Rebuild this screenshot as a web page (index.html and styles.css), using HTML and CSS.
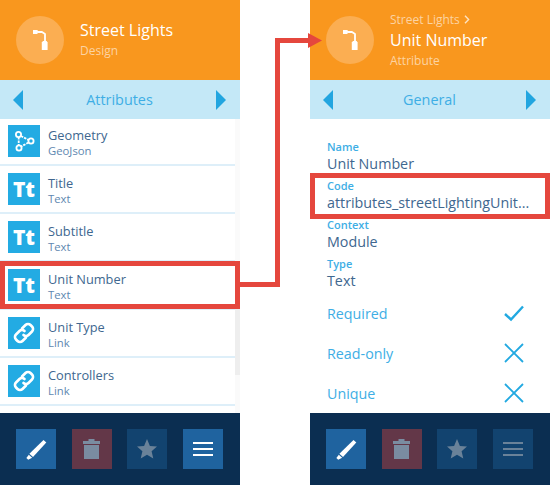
FILE: index.html
```html
<!DOCTYPE html>
<html lang="en">
<head>
<meta charset="utf-8">
<title>Street Lights</title>
<link rel="stylesheet" href="styles.css">
</head>
<body>
<svg class="defs" width="0" height="0" aria-hidden="true">
  <symbol id="lamp" viewBox="0 0 48 48">
    <path d="M17 15h4l.6 1h4.400l3 2v8" fill="none" stroke="#fff" stroke-width="1.800" stroke-linejoin="round"/>
    <path d="M17 15h4.500v3H17z" fill="#fff"/>
    <path d="M27 25h3.600l1 1.500V34h-5.800v-7.500z" fill="#fff"/>
  </symbol>
  <symbol id="pencil" viewBox="0 0 40 40">
    <path d="M27.500 11l2.800 2.600-13.300 14.400-3.600-3.200z" fill="#fff"/>
    <path d="M12.800 25.800l3.400 3-4 1.900-1.800-1.600z" fill="#fff"/>
  </symbol>
  <symbol id="trash" viewBox="0 0 40 40">
    <path d="M11 12h17v3H11zM16.500 10h6v2h-6z" fill="#7a8ca1"/>
    <path d="M12 16h15v14H12z" fill="#7a8ca1"/>
  </symbol>
  <symbol id="star" viewBox="0 0 40 40">
    <path d="M20 10l2.900 7 7.100.5-5.400 4.700 1.700 7.300-6.300-3.800-6.300 3.800 1.700-7.300-5.400-4.700 7.100-.5z" fill="#6a8299"/>
  </symbol>
  <symbol id="link" viewBox="0 0 32 32">
    <g fill="none" stroke="#fff" stroke-width="2.600" stroke-linecap="round">
      <path d="M14 11.500l3.500-3.500a3.500 3.500 0 0 1 5 0l1.500 1.500a3.500 3.500 0 0 1 0 5l-3.500 3.500a3.500 3.500 0 0 1-5 0"/>
      <path d="M18 20.500l-3.500 3.500a3.500 3.500 0 0 1-5 0l-1.500-1.500a3.500 3.500 0 0 1 0-5l3.500-3.500a3.500 3.500 0 0 1 5 0"/>
    </g>
  </symbol>
  <symbol id="cross" viewBox="0 0 20 20">
    <path d="M1 1l18 18M19 1L1 19" fill="none" stroke="#22a9e1" stroke-width="1.800"/>
  </symbol>
</svg>

<main class="page">
  <section class="panel">
    <header class="head">
      <div class="disc"><svg class="lamp" width="48" height="48"><use href="#lamp"/></svg></div>
      <div class="head-text">
        <div class="head-title">Street Lights</div>
        <div class="head-sub">Design</div>
      </div>
    </header>
    <nav class="tabs">
      <span class="tri tri-left"></span>
      <span class="tab-name">Attributes</span>
      <span class="tri tri-right"></span>
    </nav>
    <div class="body-list">
      <ul class="list">
        <li class="row">
          <span class="tile">
            <svg width="32" height="32" viewBox="0 0 32 32">
              <g fill="none" stroke="#fff" stroke-width="1.800">
                <circle cx="10.500" cy="9.500" r="2.600"/>
                <circle cx="23" cy="16" r="2.600"/>
                <circle cx="11" cy="23" r="2.600"/>
                <path d="M13 11l7.500 4M20.500 17.500L13.200 21.500M10.700 12v8.300" stroke-dasharray="2.500 1"/>
              </g>
            </svg>
          </span>
          <div class="row-text"><div class="row-name">Geometry</div><div class="row-type">GeoJson</div></div>
        </li>
        <li class="row">
          <span class="tile tile-text">Tt</span>
          <div class="row-text"><div class="row-name">Title</div><div class="row-type">Text</div></div>
        </li>
        <li class="row">
          <span class="tile tile-text">Tt</span>
          <div class="row-text"><div class="row-name">Subtitle</div><div class="row-type">Text</div></div>
        </li>
        <li class="row">
          <span class="tile tile-text">Tt</span>
          <div class="row-text"><div class="row-name">Unit Number</div><div class="row-type">Text</div></div>
        </li>
        <li class="row">
          <span class="tile"><svg width="32" height="32"><use href="#link"/></svg></span>
          <div class="row-text"><div class="row-name">Unit Type</div><div class="row-type">Link</div></div>
        </li>
        <li class="row">
          <span class="tile"><svg width="32" height="32"><use href="#link"/></svg></span>
          <div class="row-text"><div class="row-name">Controllers</div><div class="row-type">Link</div></div>
        </li>
      </ul>
      <div class="track"><div class="thumb"></div></div>
    </div>
    <footer class="foot">
      <span class="btn btn-on"><svg width="40" height="40"><use href="#pencil"/></svg></span>
      <span class="btn btn-del"><svg width="40" height="40"><use href="#trash"/></svg></span>
      <span class="btn btn-dim"><svg width="40" height="40"><use href="#star"/></svg></span>
      <span class="btn btn-on">
        <svg width="40" height="40" viewBox="0 0 40 40"><path d="M10 14h20M10 20h20M10 26h20" stroke="#fff" stroke-width="2.200"/></svg>
      </span>
    </footer>
  </section>

  <section class="panel">
    <header class="head">
      <div class="disc"><svg class="lamp" width="48" height="48"><use href="#lamp"/></svg></div>
      <div class="head-text">
        <div class="head-crumb">Street Lights <svg class="crumb-chev" width="6" height="9" viewBox="0 0 6 9"><path d="M1 .8l3.600 3.700L1 8.200" fill="none" stroke="#fde3c2" stroke-width="1.400"/></svg></div>
        <div class="head-title">Unit Number</div>
        <div class="head-sub">Attribute</div>
      </div>
    </header>
    <nav class="tabs">
      <span class="tri tri-left"></span>
      <span class="tab-name">General</span>
      <span class="tri tri-right"></span>
    </nav>
    <div class="detail">
      <div class="field"><div class="field-label">Name</div><div class="field-value">Unit Number</div></div>
      <div class="field"><div class="field-label">Code</div><div class="field-value">attributes_streetLightingUnit...</div></div>
      <div class="field"><div class="field-label">Context</div><div class="field-value">Module</div></div>
      <div class="field"><div class="field-label">Type</div><div class="field-value">Text</div></div>
      <div class="flags">
        <div class="flag"><span>Required</span><svg width="20" height="20" viewBox="0 0 20 20"><path d="M1 11l6 5.500L19 3.500" fill="none" stroke="#22a9e1" stroke-width="2.400"/></svg></div>
        <div class="flag"><span>Read-only</span><svg width="20" height="20"><use href="#cross"/></svg></div>
        <div class="flag"><span>Unique</span><svg width="20" height="20"><use href="#cross"/></svg></div>
      </div>
    </div>
    <footer class="foot">
      <span class="btn btn-on"><svg width="40" height="40"><use href="#pencil"/></svg></span>
      <span class="btn btn-del"><svg width="40" height="40"><use href="#trash"/></svg></span>
      <span class="btn btn-dim"><svg width="40" height="40"><use href="#star"/></svg></span>
      <span class="btn btn-dim">
        <svg width="40" height="40" viewBox="0 0 40 40"><path d="M10 14h20M10 20h20M10 26h20" stroke="#6a8299" stroke-width="2.200"/></svg>
      </span>
    </footer>
  </section>

  <div class="mark mark-row"></div>
  <div class="mark mark-code"></div>
  <svg class="connector" width="84" height="256" viewBox="0 0 84 256">
    <path d="M0 251.500h37.500V7.500h32" fill="none" stroke="#e5473d" stroke-width="5"/>
    <path d="M68 0l14 7.500L68 15z" fill="#e5473d"/>
  </svg>
</main>
</body>
</html>
```

FILE: styles.css
```css
* { box-sizing: border-box; }

html, body { margin: 0; padding: 0; background: #fff; }

body {
  font-family: "Open Sans", "Noto Sans", sans-serif;
  width: 550px;
  height: 485px;
  overflow: hidden;
}

.defs { display: block; height: 0; }

.page {
  position: relative;
  display: flex;
  justify-content: space-between;
  width: 550px;
  height: 485px;
}

.panel {
  display: flex;
  flex-direction: column;
  width: 240px;
  height: 485px;
}

.head {
  display: flex;
  align-items: center;
  gap: 16px;
  height: 80px;
  padding-left: 16px;
  background: #f9971e;
  flex: none;
}

.disc {
  width: 48px;
  height: 48px;
  border-radius: 50%;
  background: #fbae52;
  flex: none;
}

.lamp { display: block; }

.head-text { display: flex; flex-direction: column; }

.head-title {
  font-size: 16px;
  line-height: 20px;
  color: #fff;
}

.head-sub,
.head-crumb {
  font-size: 12px;
  line-height: 20px;
  color: #fcd3a2;
}

.head-sub { line-height: 19px; margin-top: 1px; }

.crumb-chev { margin-left: 1px; }

.tabs {
  display: flex;
  align-items: center;
  justify-content: space-between;
  height: 39px;
  padding: 0 14px 0 13px;
  background: #c4e8f7;
  flex: none;
}

.tab-name {
  font-size: 14.400px;
  color: #3eaee5;
}

.tri {
  width: 0;
  height: 0;
  border-top: 10px solid transparent;
  border-bottom: 10px solid transparent;
}

.tri-left { border-right: 10px solid #22a5e0; }
.tri-right { border-left: 10px solid #22a5e0; }

.body-list {
  display: flex;
  flex: 1;
  min-height: 0;
}

.list {
  list-style: none;
  margin: 0;
  padding: 0;
  flex: 1;
}

.row {
  display: flex;
  align-items: center;
  gap: 8px;
  height: 48px;
  padding: 6px 8px 7px;
  border-bottom: 2px solid #deeff9;
}

.row:first-child { height: 47px; }

.tile {
  display: flex;
  align-items: center;
  justify-content: center;
  width: 32px;
  height: 32px;
  background: #23abe3;
  flex: none;
}

.tile-text {
  color: #fff;
  font-size: 21px;
  font-weight: 800;
}

.row-text {
  display: flex;
  flex-direction: column;
  padding-top: 4px;
}

.row-name {
  font-size: 12.800px;
  line-height: 15px;
  color: #40678f;
}

.row-type {
  font-size: 11.300px;
  line-height: 15px;
  color: #5e87b0;
}

.track {
  width: 5px;
  padding-top: 170px;
  background: #fafafa;
  flex: none;
}

.thumb {
  height: 86px;
  background: #eee;
}

.foot {
  display: flex;
  justify-content: space-between;
  align-items: center;
  height: 72px;
  padding: 0 17px 0 16px;
  background: #0b2e51;
  flex: none;
}

.btn {
  display: block;
  width: 40px;
  height: 40px;
}

.btn svg { display: block; }

.btn-on { background: #1f639f; }
.btn-del { background: #633748; }
.btn-dim { background: #12436f; }

.detail {
  display: flex;
  flex-direction: column;
  gap: 6px;
  flex: 1;
  min-height: 0;
  padding: 21px 26px 0 17px;
}

.field { height: 34px; }

.field-label {
  font-size: 11px;
  font-weight: 600;
  line-height: 14px;
  color: #3eaee5;
}

.field-value {
  font-size: 14.300px;
  line-height: 18px;
  padding-top: 1px;
  color: #40678f;
  white-space: nowrap;
}

.flags {
  display: flex;
  flex-direction: column;
  margin-top: -3px;
}

.flag {
  display: flex;
  align-items: center;
  justify-content: space-between;
  height: 40px;
  font-size: 14.300px;
  color: #3eaee5;
}

.mark {
  position: absolute;
  border: 5px solid #e5473d;
  width: 240px;
}

.mark-row { left: 0; top: 261px; height: 48px; }
.mark-code { left: 310px; top: 173px; height: 46px; }

.connector {
  position: absolute;
  left: 240px;
  top: 33px;
}
```
